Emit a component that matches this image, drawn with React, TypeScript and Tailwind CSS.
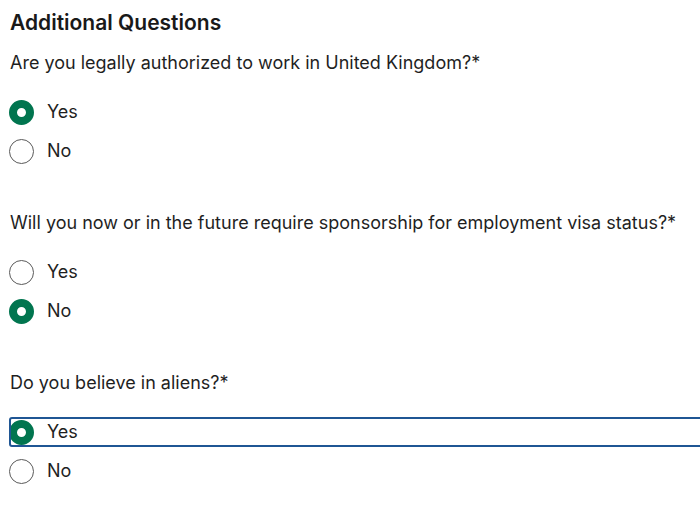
import React, { useState } from 'react';

type Question = {
  id: string;
  label: string;
  options: string[];
};

const questions: Question[] = [
  {
    id: 'work-auth',
    label: 'Are you legally authorized to work in United Kingdom?*',
    options: ['Yes', 'No'],
  },
  {
    id: 'sponsorship',
    label:
      'Will you now or in the future require sponsorship for employment visa status?*',
    options: ['Yes', 'No'],
  },
  {
    id: 'aliens',
    label: 'Do you believe in aliens?*',
    options: ['Yes', 'No'],
  },
];

const RadioDot: React.FC<{ checked: boolean }> = ({ checked }) => (
  <span
    className={`box-border block h-[25px] w-[25px] shrink-0 rounded-full ${
      checked
        ? 'border-[8.5px] border-[#01754f] bg-white'
        : 'border-[1.5px] border-[#5a5a5a] bg-white'
    }`}
  />
);

const App: React.FC = () => {
  const [answers, setAnswers] = useState<Record<string, string>>({
    'work-auth': 'Yes',
    sponsorship: 'No',
    aliens: 'Yes',
  });
  const focused = 'aliens-Yes';

  return (
    <div
      className="h-[515px] w-[700px] overflow-hidden bg-white pl-[9px] pr-[10px] pt-[9px] text-[#1f1f1f]"
      style={{ fontFamily: 'Inter, "Noto Sans", sans-serif' }}
    >
      <h2 className="pl-px text-[21px] font-semibold leading-[28px] text-[#191919]">
        Additional Questions
      </h2>

      <div className="mt-[14px] flex flex-col gap-[45px]">
        {questions.map((question) => (
          <fieldset key={question.id}>
            <legend className="pl-px text-[18px] leading-[24px]">
              {question.label}
            </legend>
            <div className="mt-[22px] flex flex-col gap-[9px]">
              {question.options.map((option) => {
                const checked = answers[question.id] === option;
                const isFocused = `${question.id}-${option}` === focused;
                return (
                  <label
                    key={option}
                    onClick={() =>
                      setAnswers({ ...answers, [question.id]: option })
                    }
                    className={`flex h-[30px] cursor-pointer items-center gap-[13px] ${
                      isFocused
                        ? '-mr-[30px] rounded-[3px] outline-2 outline-offset-[-2px] outline-[#1f5694]'
                        : ''
                    }`}
                  >
                    <RadioDot checked={checked} />
                    <span className="text-[18px] leading-[24px]">
                      {option}
                    </span>
                  </label>
                );
              })}
            </div>
          </fieldset>
        ))}
      </div>
    </div>
  );
};

export default App;
